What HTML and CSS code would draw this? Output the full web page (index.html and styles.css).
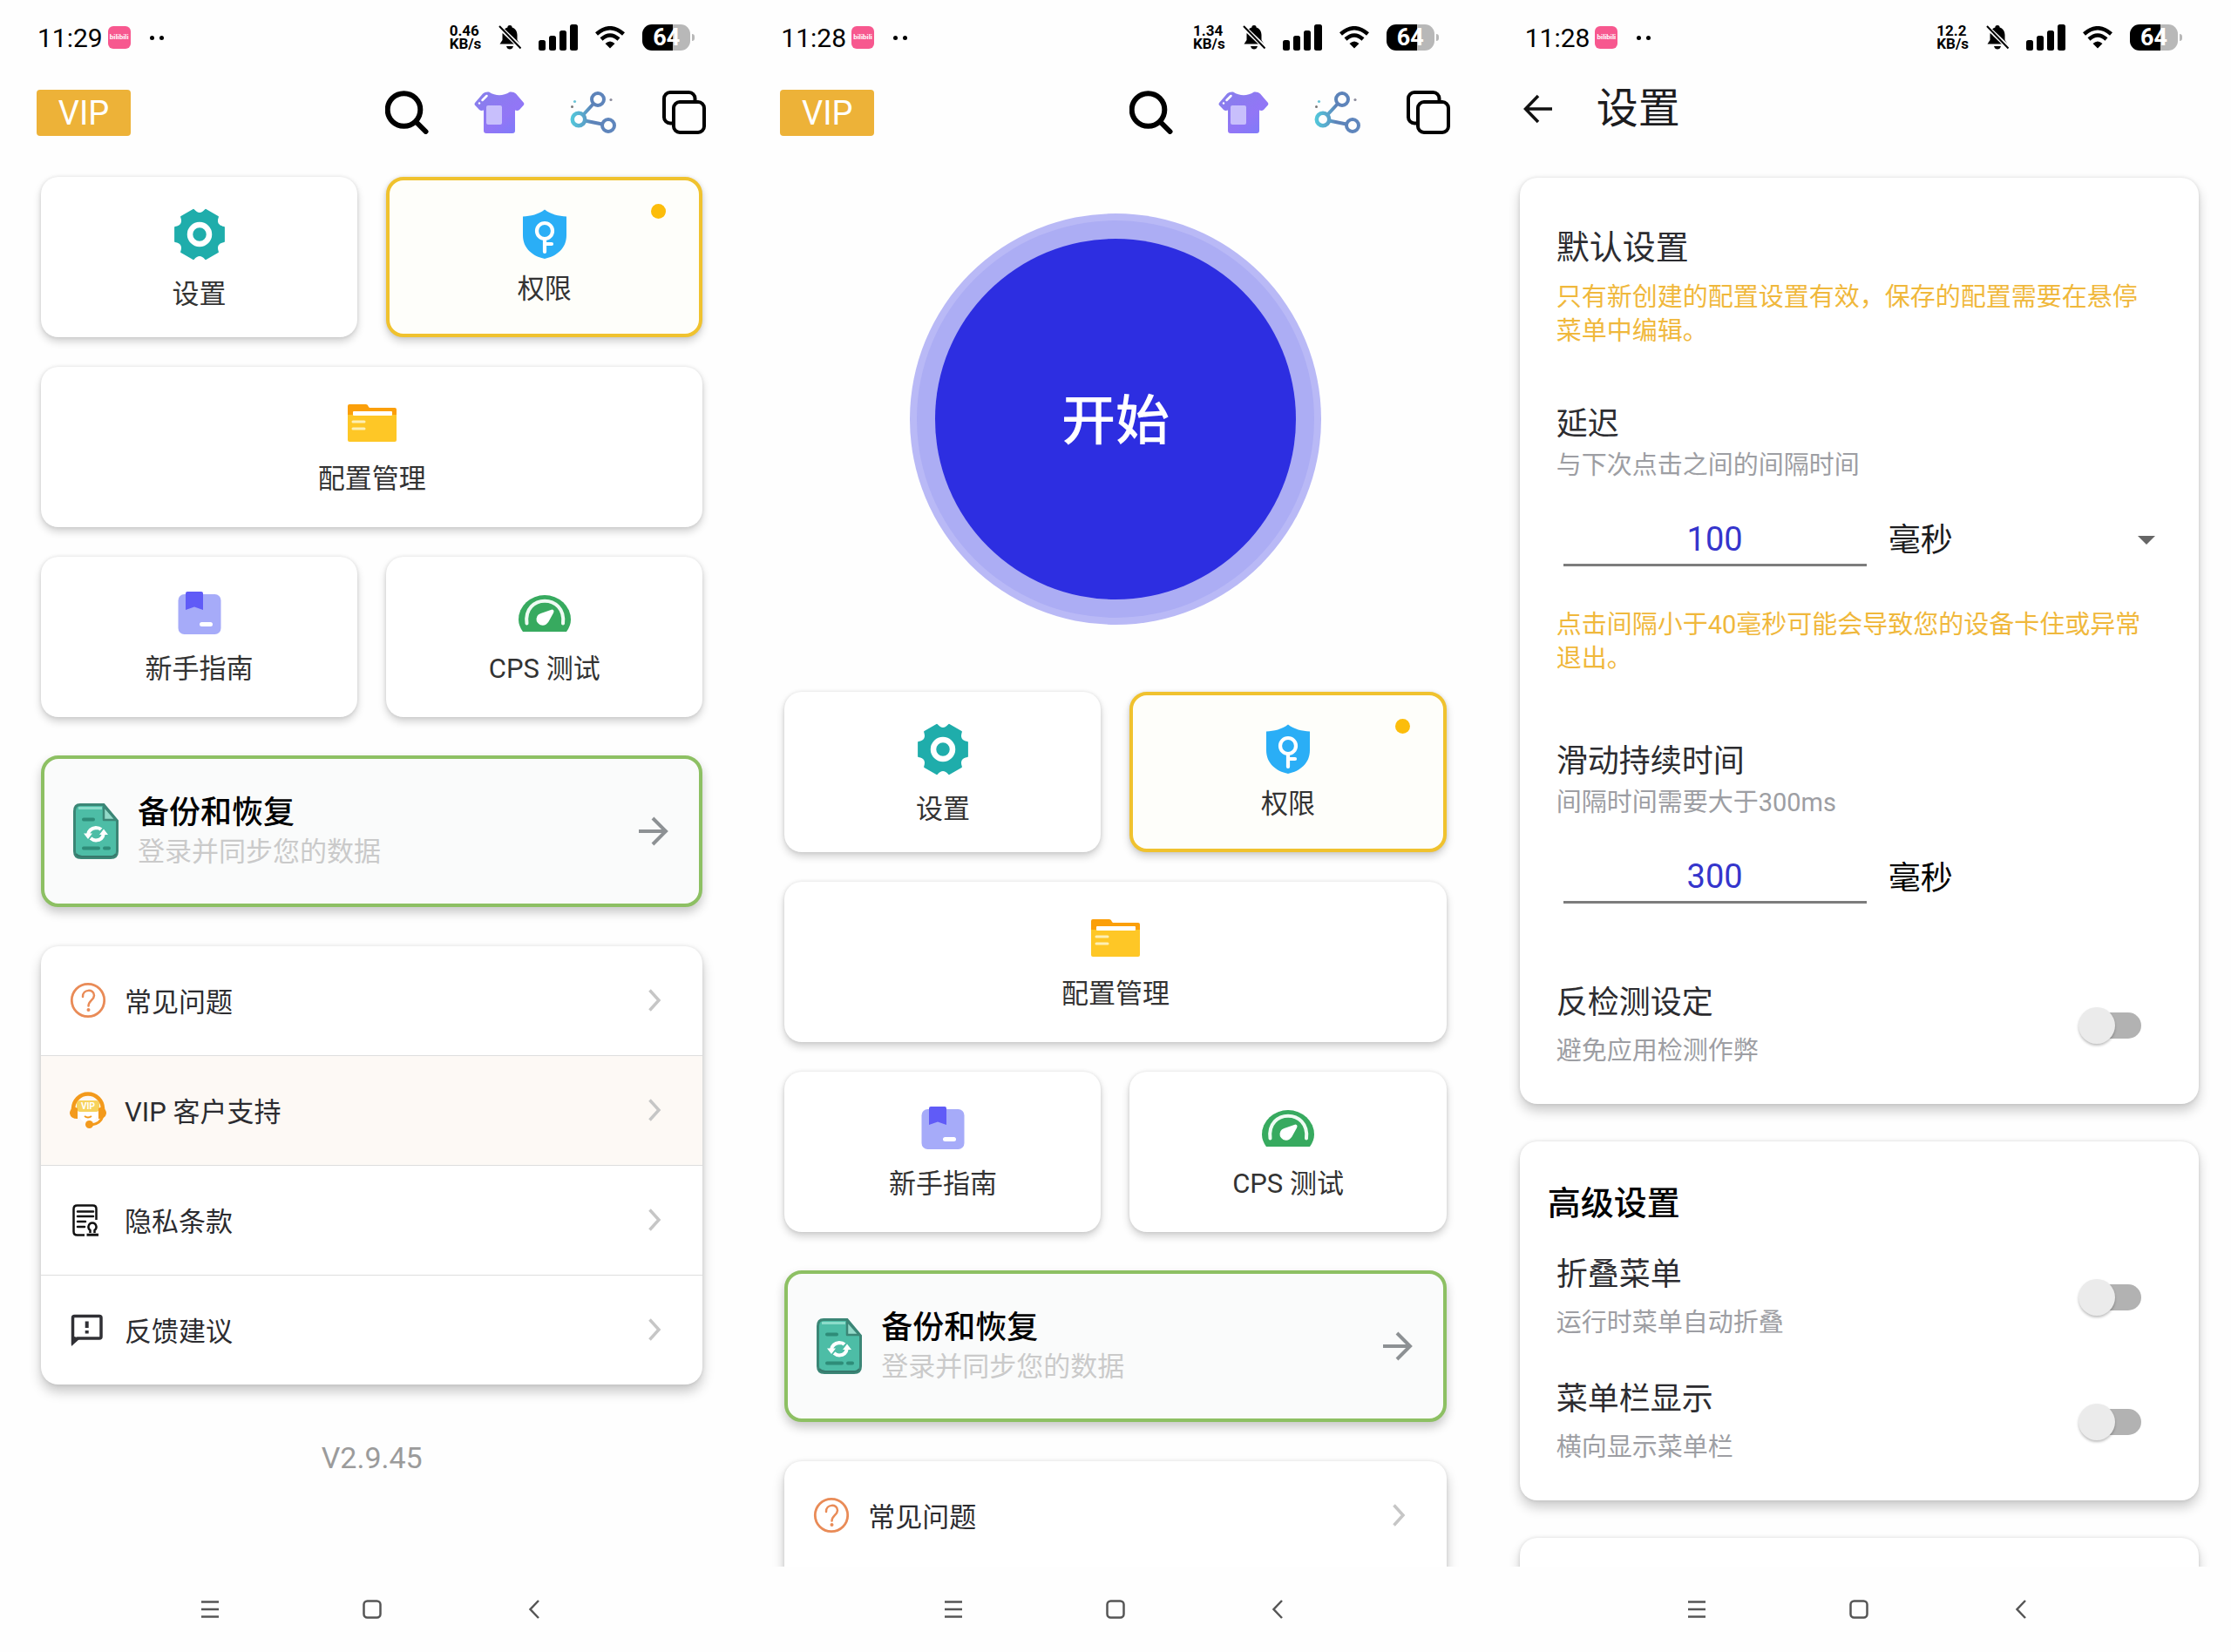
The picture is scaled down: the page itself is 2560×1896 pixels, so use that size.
FILE: index.html
```html
<!DOCTYPE html>
<html lang="zh-CN">
<head>
    <title>自动点击器</title>
    <meta charset="UTF-8">
    <meta name="viewport" content="width=device-width, initial-scale=1.0">
    <link rel="stylesheet" href="styles.css">
</head>
<body>
    <!-- icon sprite -->
    <svg class="sprite" aria-hidden="true">
        <defs>
            <linearGradient id="shirtFill" x1="0" y1="0" x2="1" y2="1">
                <stop offset="0" stop-color="#8680ea"/>
                <stop offset="0.6" stop-color="#9276f6"/>
                <stop offset="1" stop-color="#7b7cfa"/>
            </linearGradient>
            <linearGradient id="shareFill" gradientUnits="userSpaceOnUse" x1="0" y1="30" x2="50" y2="30">
                <stop offset="0" stop-color="#52cbdc"/>
                <stop offset="0.35" stop-color="#5aa0c8"/>
                <stop offset="0.5" stop-color="#5c82b8"/>
                <stop offset="1" stop-color="#5f86bd"/>
            </linearGradient>
        </defs>
        <symbol id="bell" viewBox="0 0 26 28">
            <path d="M13 0c2 0 2.600 1.200 2.600 2.400C19.500 3.600 21.500 7 21.500 11v6l3 4.500H1.500l3-4.500v-6c0-4 2-7.400 5.900-8.600C10.400 1.200 11 0 13 0z"/>
            <path d="M9 24h8q-1 3.500-4 3.500T9 24z"/>
            <path d="M0 1l26 25" stroke="#fff" stroke-width="5"/>
            <path d="M1 1l24.500 25.500" stroke="#000" stroke-width="2"/>
        </symbol>
        <symbol id="signal" viewBox="0 0 45 30">
            <rect x="0" y="18" width="8" height="12" rx="2.500"/>
            <rect x="12" y="13" width="8" height="17" rx="2.500"/>
            <rect x="24" y="7" width="8" height="23" rx="2.500"/>
            <rect x="36" y="0" width="9" height="30" rx="2.500"/>
        </symbol>
        <symbol id="wifi" viewBox="0 0 34 26">
            <g fill="none" stroke="#000" stroke-width="4.500">
                <path d="M1.500 9Q17-4.500 32.500 9"/>
                <path d="M7 15Q17 6 27 15"/>
            </g>
            <path d="M17 25.500l-5.500-5.500q5.500-5 11 0z"/>
        </symbol>
        <symbol id="search" viewBox="0 0 50 50">
            <g fill="none" stroke="#000" stroke-width="6" stroke-linecap="round">
                <circle cx="21.500" cy="22" r="18.800"/>
                <path d="M36.500 37L46.500 47"/>
            </g>
        </symbol>
        <symbol id="shirt" viewBox="0 0 58 50">
            <path d="M10 3.500Q12.500 1 17 1.500 29 9 41 1.500q4.500-.500 7 2L57 14q.800 1.200 0 2.500l-5 5.500q-2 1.500-5 .500V46q0 3-3 3H14q-3 0-3-3V22.500q-3 1-5-.500L.800 16.500Q0 15 1 14z" fill="url(#shirtFill)"/>
            <rect x="14" y="17" width="18" height="22" rx="2" fill="#c8bffc"/>
            <path d="M9.500 11l5-5" stroke="#fff" stroke-width="2.500" stroke-linecap="round"/>
            <circle cx="6" cy="14.500" r="1.200" fill="#fff"/>
        </symbol>
        <symbol id="share" viewBox="0 0 54 50">
            <g fill="none" stroke="url(#shareFill)" stroke-width="4">
                <circle cx="32" cy="10" r="7"/>
                <circle cx="10" cy="33" r="7.200" stroke-width="4.500"/>
                <circle cx="44" cy="40" r="7"/>
                <path d="M27 15L15 28M17 34.500L37 38.500"/>
            </g>
            <circle cx="5.500" cy="12.500" r="1.600" fill="#6bc3d6"/>
            <circle cx="2.500" cy="18.500" r="1.500" fill="#777"/>
            <circle cx="47" cy="10.500" r="1.600" fill="#8c8c9c"/>
        </symbol>
        <symbol id="copy" viewBox="0 0 50 50">
            <g fill="none" stroke="#000" stroke-width="4">
                <path d="M12 37.500H9a7 7 0 0 1-7-7V9a7 7 0 0 1 7-7h21.500a7 7 0 0 1 7 7v3"/>
                <rect x="13" y="13" width="35" height="35" rx="7"/>
            </g>
        </symbol>
        <symbol id="gear" viewBox="0 0 60 60">
            <path d="M57.900 22V38Q47.300 40 50.900 50.100L37 58.100Q30 50 23 58.100L9.100 50.100Q12.700 40 2.100 38V22Q12.700 20 9.100 9.900L23 1.900Q30 10 37 1.900L50.900 9.900Q47.300 20 57.900 22Z" fill="#1fadab" stroke="#1fadab" stroke-width="2" stroke-linejoin="round"/>
            <circle cx="30" cy="30" r="11" fill="none" stroke="#fff" stroke-width="6.500"/>
        </symbol>
        <symbol id="shield" viewBox="0 0 60 60">
            <path d="M30 1.500C37 7 46 9 55 9.500V31C55 46 44 55 30 58 16 55 5 46 5 31V9.500C14 9 23 7 30 1.500Z" fill="#2aaef6"/>
            <g fill="none" stroke="#fff" stroke-width="4.200" stroke-linecap="round">
                <circle cx="30" cy="26" r="9"/>
                <path d="M30 36V50M31 41h7"/>
            </g>
        </symbol>
        <symbol id="folder" viewBox="0 0 60 60">
            <path d="M2 22V9q0-2 2-2H23q2 0 3 3l1 1H56q2 0 2 2v9z" fill="#fb9f0a"/>
            <path d="M2 19H58V48q0 2-2 2H4q-2 0-2-2z" fill="#fec726"/>
            <rect x="8" y="15" width="45" height="5" rx="1" fill="#fff"/>
            <path d="M8 27H21M8 35H21" stroke="#fdf0b5" stroke-width="3" stroke-linecap="round"/>
        </symbol>
        <symbol id="book" viewBox="0 0 60 60">
            <rect x="5.500" y="7" width="49" height="46" rx="7" fill="#a6abf9"/>
            <path d="M14 6q0-2 2-2H32q2 0 2 2V25L24 21.500 14 25z" fill="#605bf7"/>
            <rect x="30" y="39" width="15" height="5" rx="2.500" fill="#fff"/>
        </symbol>
        <symbol id="gauge" viewBox="0 0 60 60">
            <path d="M5 50Q0 43 0 36a30 28 0 0 1 60 0Q60 43 55 50z" fill="#37aa5f"/>
            <path d="M9.500 40.500C5 6 55 6 51 40.500" fill="none" stroke="#effbf3" stroke-width="4" stroke-linecap="round"/>
            <path d="M38.500 24.500q3 .500 1.500 4L34.500 38.500q-4 6-10 3.500-6-4-3-10 1-2 4-3z" fill="#fff"/>
        </symbol>
        <symbol id="backup" viewBox="0 0 52 64">
            <path d="M8 1.500H35L50.500 20V55q0 7.500-7.500 7.500H9q-7.500 0-7.500-7.500V9Q1.500 1.500 8 1.500z" fill="#4dbda6" stroke="#3b8676" stroke-width="3"/>
            <path d="M6 5.500H33" stroke="#8bdcca" stroke-width="3"/>
            <path d="M35 3V19H49z" fill="#93d9c8" stroke="#3b8676" stroke-width="2.500" stroke-linejoin="round"/>
            <path d="M12 18.500H23M12 51.500H29M36 51.500H41" stroke="#2e8c78" stroke-width="4" stroke-linecap="round"/>
            <path d="M3 58q3 3 7 3H42q5 0 7-3" fill="none" stroke="#37796c" stroke-width="2"/>
            <g fill="none" stroke="#fff" stroke-width="4">
                <path d="M17 36q1-7 9-8 4 0 6 2"/>
                <path d="M35 34q-1 8-9 8.500-3 0-6-2.500"/>
            </g>
            <path d="M12 34.500h10L17 41zM30 36h10L35 29.500z" fill="#fff"/>
        </symbol>
        <symbol id="question" viewBox="0 0 42 42">
            <circle cx="21" cy="21" r="18.700" fill="none" stroke="#e98b57" stroke-width="2.800"/>
            <path d="M15 17c-.500-9 13-9.500 13-1.500 0 5-6.500 6-6.500 12" fill="none" stroke="#e98b57" stroke-width="2.500" stroke-linecap="round"/>
            <circle cx="21.500" cy="32" r="2" fill="#e98b57"/>
        </symbol>
        <symbol id="terms" viewBox="0 0 42 42">
            <g fill="none" stroke="#111" stroke-width="2.500">
                <path d="M17 38.500H8.500q-4 0-4-4V8.500q0-4 4-4h18q4 0 4 4V21"/>
                <path d="M9 11.500H27M9 17H27M9 23H18M9 29H17" stroke-linecap="round"/>
                <path d="M23.500 36V33q-2.500-2-2-4.500 1-4 4.500-4t4.500 4q.500 2.500-2 4.500V36"/>
                <path d="M19.500 38.200H33" stroke-width="3"/>
            </g>
        </symbol>
        <symbol id="feedback" viewBox="0 0 42 42">
            <path d="M3.500 35V7.500q0-2 2-2H34q2 0 2 2V29q0 2-2 2H9z" fill="none" stroke="#303035" stroke-width="3.500"/>
            <path d="M2 28V40L12 31z" fill="#303035"/>
            <path d="M19.700 11.500v7.500M19.700 22v3.500" stroke="#303035" stroke-width="4"/>
        </symbol>
        <symbol id="chevron" viewBox="0 0 16 26">
            <path d="M2.500 1.500L13 13 2.500 24.500" fill="none" stroke="#c6c6c6" stroke-width="3.500"/>
        </symbol>
        <symbol id="arrow" viewBox="0 0 34 34">
            <path d="M0 17H31M16 2L31 17 16 32" fill="none" stroke="#8d9194" stroke-width="4"/>
        </symbol>
        <symbol id="back" viewBox="0 0 34 34">
            <path d="M33 17H3M17 2L2.500 17 17 32" fill="none" stroke="#111" stroke-width="3.500"/>
        </symbol>
        <symbol id="navMenu" viewBox="0 0 24 24">
            <path d="M2 3.500H22M2 12H22M2 20.500H22" stroke="#555" stroke-width="2.500"/>
        </symbol>
        <symbol id="navHome" viewBox="0 0 24 24">
            <rect x="2.500" y="2.500" width="19" height="19" rx="4" fill="none" stroke="#555" stroke-width="2.500"/>
        </symbol>
        <symbol id="navBack" viewBox="0 0 24 24">
            <path d="M17 2L7.500 12 17 22" fill="none" stroke="#555" stroke-width="2.500"/>
        </symbol>
    </svg>

    <!-- home, scrolled down -->
    <section class="phone">
        <div class="status">
            <span class="time">11:29</span>
            <span class="app-icon">bilibili</span>
            <span class="dots"><i></i><i></i></span>
            <div class="status-right">
                <span class="speed">0.46<br>KB/s</span>
                <svg class="bell"><use href="#bell"/></svg>
                <svg class="signal"><use href="#signal"/></svg>
                <svg class="wifi"><use href="#wifi"/></svg>
                <span class="battery">64</span>
            </div>
        </div>
        <header class="toolbar">
            <button class="vip">VIP</button>
            <div class="tools">
                <button aria-label="搜索"><svg class="tool"><use href="#search"/></svg></button>
                <button aria-label="主题"><svg class="tool tool-shirt"><use href="#shirt"/></svg></button>
                <button aria-label="分享"><svg class="tool tool-share"><use href="#share"/></svg></button>
                <button aria-label="复制"><svg class="tool"><use href="#copy"/></svg></button>
            </div>
        </header>
        <main class="content home">
            <div class="tiles">
                <button class="tile tile-roomy"><svg><use href="#gear"/></svg>设置</button>
                <button class="tile tile-alert"><svg><use href="#shield"/></svg>权限<span class="dot"></span></button>
                <button class="tile tile-full"><svg><use href="#folder"/></svg>配置管理</button>
                <button class="tile"><svg><use href="#book"/></svg>新手指南</button>
                <button class="tile"><svg><use href="#gauge"/></svg>CPS 测试</button>
            </div>
            <button class="backup">
                <svg class="backup-icon"><use href="#backup"/></svg>
                <span class="backup-text"><strong>备份和恢复</strong><small>登录并同步您的数据</small></span>
                <svg class="arrow"><use href="#arrow"/></svg>
            </button>
            <nav class="list">
                <a href="#"><svg><use href="#question"/></svg>常见问题<svg class="chevron"><use href="#chevron"/></svg></a>
                <a href="#" class="warm">
                    <svg viewBox="0 0 42 42">
                        <path d="M4 20a16.500 17 0 0 1 34 0" fill="none" stroke="#f39a1c" stroke-width="4.500"/>
                        <path d="M11 22H31V28Q29 35 21 36 13 35 11 28z" fill="#fff"/>
                        <rect x="8" y="10" width="26" height="13" rx="4" fill="#f7d25c"/>
                        <path d="M17 28q4 3 8 0" fill="none" stroke="#f39a1c" stroke-width="2"/>
                        <path d="M9 19V31Q1 31 0 25 0 20 5 17zM33 19V31Q41 31 42 25 42 20 37 17z" fill="#f39a1c"/>
                        <path d="M38 28Q35 37 25 38" fill="none" stroke="#f39a1c" stroke-width="3"/>
                        <circle cx="22.500" cy="37.500" r="4.500" fill="#f39a1c"/>
                        <text class="support-vip" x="21" y="20" text-anchor="middle">VIP</text>
                    </svg>
                    VIP 客户支持
                    <svg class="chevron"><use href="#chevron"/></svg>
                </a>
                <a href="#"><svg><use href="#terms"/></svg>隐私条款<svg class="chevron"><use href="#chevron"/></svg></a>
                <a href="#"><svg><use href="#feedback"/></svg>反馈建议<svg class="chevron"><use href="#chevron"/></svg></a>
            </nav>
            <p class="version">V2.9.45</p>
        </main>
        <footer class="nav">
            <button aria-label="菜单"><svg><use href="#navMenu"/></svg></button>
            <button aria-label="主页"><svg><use href="#navHome"/></svg></button>
            <button aria-label="返回"><svg><use href="#navBack"/></svg></button>
        </footer>
    </section>

    <!-- home, top -->
    <section class="phone">
        <div class="status">
            <span class="time">11:28</span>
            <span class="app-icon">bilibili</span>
            <span class="dots"><i></i><i></i></span>
            <div class="status-right">
                <span class="speed">1.34<br>KB/s</span>
                <svg class="bell"><use href="#bell"/></svg>
                <svg class="signal"><use href="#signal"/></svg>
                <svg class="wifi"><use href="#wifi"/></svg>
                <span class="battery">64</span>
            </div>
        </div>
        <header class="toolbar">
            <button class="vip">VIP</button>
            <div class="tools">
                <button aria-label="搜索"><svg class="tool"><use href="#search"/></svg></button>
                <button aria-label="主题"><svg class="tool tool-shirt"><use href="#shirt"/></svg></button>
                <button aria-label="分享"><svg class="tool tool-share"><use href="#share"/></svg></button>
                <button aria-label="复制"><svg class="tool"><use href="#copy"/></svg></button>
            </div>
        </header>
        <main class="content home">
            <div class="hero">
                <button class="start">开始</button>
            </div>
            <div class="tiles">
                <button class="tile tile-roomy"><svg><use href="#gear"/></svg>设置</button>
                <button class="tile tile-alert"><svg><use href="#shield"/></svg>权限<span class="dot"></span></button>
                <button class="tile tile-full"><svg><use href="#folder"/></svg>配置管理</button>
                <button class="tile"><svg><use href="#book"/></svg>新手指南</button>
                <button class="tile"><svg><use href="#gauge"/></svg>CPS 测试</button>
            </div>
            <button class="backup">
                <svg class="backup-icon"><use href="#backup"/></svg>
                <span class="backup-text"><strong>备份和恢复</strong><small>登录并同步您的数据</small></span>
                <svg class="arrow"><use href="#arrow"/></svg>
            </button>
            <nav class="list list-cut">
                <a href="#"><svg><use href="#question"/></svg>常见问题<svg class="chevron"><use href="#chevron"/></svg></a>
            </nav>
        </main>
        <footer class="nav">
            <button aria-label="菜单"><svg><use href="#navMenu"/></svg></button>
            <button aria-label="主页"><svg><use href="#navHome"/></svg></button>
            <button aria-label="返回"><svg><use href="#navBack"/></svg></button>
        </footer>
    </section>

    <!-- settings -->
    <section class="phone">
        <div class="status">
            <span class="time">11:28</span>
            <span class="app-icon">bilibili</span>
            <span class="dots"><i></i><i></i></span>
            <div class="status-right">
                <span class="speed">12.2<br>KB/s</span>
                <svg class="bell"><use href="#bell"/></svg>
                <svg class="signal"><use href="#signal"/></svg>
                <svg class="wifi"><use href="#wifi"/></svg>
                <span class="battery">64</span>
            </div>
        </div>
        <header class="titlebar">
            <button aria-label="返回"><svg class="arrow"><use href="#back"/></svg></button>
            <h1>设置</h1>
        </header>
        <main class="content settings">
            <section class="card card-default">
                <h2>默认设置</h2>
                <p class="warning">只有新创建的配置设置有效，保存的配置需要在悬停菜单中编辑。</p>
                <div class="field">
                    <label for="delay">延迟</label>
                    <p class="hint">与下次点击之间的间隔时间</p>
                    <div class="field-row">
                        <input type="text" id="delay" value="100">
                        <div class="unit-select">
                            <select aria-label="单位">
                                <option>毫秒</option>
                            </select>
                        </div>
                    </div>
                </div>
                <p class="warning warning-delay">点击间隔小于40毫秒可能会导致您的设备卡住或异常退出。</p>
                <div class="field field-swipe">
                    <label for="swipe">滑动持续时间</label>
                    <p class="hint">间隔时间需要大于300ms</p>
                    <div class="field-row">
                        <input type="text" id="swipe" value="300">
                        <span class="unit">毫秒</span>
                    </div>
                </div>
                <div class="switch-row switch-detect">
                    <div>
                        <label for="detect">反检测设定</label>
                        <p class="hint">避免应用检测作弊</p>
                    </div>
                    <input type="checkbox" id="detect" class="switch">
                </div>
            </section>
            <section class="card card-advanced">
                <h2>高级设置</h2>
                <div class="switch-row">
                    <div>
                        <label for="fold">折叠菜单</label>
                        <p class="hint">运行时菜单自动折叠</p>
                    </div>
                    <input type="checkbox" id="fold" class="switch">
                </div>
                <div class="switch-row">
                    <div>
                        <label for="menubar">菜单栏显示</label>
                        <p class="hint">横向显示菜单栏</p>
                    </div>
                    <input type="checkbox" id="menubar" class="switch">
                </div>
            </section>
            <section class="card card-next"></section>
        </main>
        <footer class="nav">
            <button aria-label="菜单"><svg><use href="#navMenu"/></svg></button>
            <button aria-label="主页"><svg><use href="#navHome"/></svg></button>
            <button aria-label="返回"><svg><use href="#navBack"/></svg></button>
        </footer>
    </section>
</body>
</html>
```
FILE: styles.css
```css
* {
    box-sizing: border-box;
    margin: 0;
    padding: 0;
}

body {
    display: grid;
    grid-template-columns: repeat(3, 1fr);
    height: 100vh;
    overflow: hidden;
    background-color: #fefefe;
    color: #2c2c30;
    font-family: Roboto, "Noto Sans CJK SC", sans-serif;
    font-size: 31px;
}

button,
input,
select {
    border: none;
    background: none;
    color: inherit;
    font: inherit;
}

button {
    cursor: pointer;
}

svg {
    display: block;
    flex: none;
}

.sprite {
    position: absolute;
    width: 0;
    height: 0;
}

.phone {
    display: flex;
    flex-direction: column;
    min-width: 0;
    height: 100vh;
}

/* status bar */
.status {
    display: flex;
    align-items: center;
    flex: none;
    height: 86px;
    padding: 0 61px 0 43px;
    color: #000;
}

.time {
    margin-right: 6px;
    font-size: 30px;
}

.app-icon {
    width: 26px;
    border-radius: 6px;
    background-color: #f7588f;
    color: #fff;
    font-size: 8px;
    font-weight: 700;
    line-height: 26px;
    text-align: center;
}

.dots {
    display: flex;
    gap: 6px;
    margin-left: 22px;
}

.dots i {
    width: 5px;
    height: 5px;
    border-radius: 50%;
    background-color: #000;
}

.status-right {
    display: flex;
    align-items: center;
    gap: 20px;
    margin-left: auto;
}

.speed {
    font-size: 17px;
    font-weight: 700;
    line-height: 15px;
}

.bell {
    width: 26px;
    height: 28px;
}

.signal {
    width: 45px;
    height: 30px;
}

.wifi {
    width: 34px;
    height: 26px;
}

.battery {
    position: relative;
    width: 55px;
    border-radius: 11px;
    background: linear-gradient(to right, #000 64%, #b8b8b8 64%);
    color: #fff;
    font-size: 27px;
    font-weight: 700;
    line-height: 30px;
    text-align: center;
}

.battery::after {
    content: "";
    position: absolute;
    top: 11px;
    right: -5px;
    width: 3px;
    height: 8px;
    border-radius: 0 3px 3px 0;
    background-color: #b8b8b8;
}

/* top bars */
.toolbar {
    display: flex;
    align-items: center;
    justify-content: space-between;
    flex: none;
    height: 86px;
    padding: 0 43px 0 42px;
}

.vip {
    width: 108px;
    padding-top: 2px;
    border-radius: 4px;
    background-color: #edb238;
    color: #fff;
    font-size: 38px;
    line-height: 51px;
}

.tools {
    display: flex;
    align-items: center;
    gap: 52px;
}

.tool {
    width: 50px;
    height: 50px;
}

.tool-shirt {
    width: 58px;
}

.tool-share {
    width: 54px;
}

.titlebar {
    display: flex;
    align-items: center;
    gap: 50px;
    flex: none;
    height: 78px;
    padding-left: 41px;
}

.titlebar h1 {
    color: #1c1c1e;
    font-size: 48px;
    font-weight: 400;
    line-height: 64px;
}

.content {
    flex: 1;
    min-height: 0;
    overflow: hidden;
}

/* home */
.home {
    padding: 31px 47px 0;
}

.hero {
    display: flex;
    justify-content: center;
    padding: 71px 0 106px;
}

.start {
    width: 414px;
    height: 414px;
    padding-bottom: 6px;
    border-radius: 50%;
    background-color: #2d2ee1;
    box-shadow: 0 0 0 21px #acadf4, 0 0 0 29px #b9b9f6;
    color: #fff;
    font-size: 62px;
    font-weight: 500;
}

.tiles {
    display: grid;
    grid-template-columns: 1fr 1fr;
    gap: 34px 33px;
}

.tile,
.list,
.card {
    border-radius: 20px;
    background-color: #fff;
    box-shadow: 0 5px 10px rgba(0, 0, 0, 0.18), 0 0 4px rgba(0, 0, 0, 0.1);
}

.tile {
    position: relative;
    display: flex;
    flex-direction: column;
    align-items: center;
    gap: 13px;
    height: 184px;
    padding-top: 36px;
    color: #333;
    line-height: 40px;
}

.tile svg {
    width: 60px;
    height: 60px;
}

.tile-roomy {
    gap: 19px;
}

.tile-full {
    grid-column: 1 / -1;
}

.tile-alert {
    padding-top: 32px;
    border: 4px solid #f0c22e;
    background-color: #fefefa;
}

.dot {
    position: absolute;
    top: 27px;
    right: 38px;
    width: 17px;
    height: 17px;
    border-radius: 50%;
    background-color: #fcbd0b;
}

.backup {
    display: flex;
    align-items: center;
    width: 100%;
    height: 174px;
    margin: 44px 0 45px;
    padding: 0 35px 0 33px;
    border: 4px solid #8dc063;
    border-radius: 20px;
    background-color: #fafbfb;
    box-shadow: 0 6px 12px rgba(0, 0, 0, 0.22);
    text-align: left;
}

.backup-icon {
    width: 52px;
    height: 64px;
}

.backup-text {
    display: flex;
    flex: 1;
    flex-direction: column;
    margin-left: 22px;
}

.backup-text strong {
    color: #000;
    font-size: 36px;
    font-weight: 500;
    line-height: 48px;
}

.backup-text small {
    color: #cacaca;
    font-size: 31px;
    line-height: 42px;
}

.arrow {
    width: 34px;
    height: 34px;
}

.list {
    overflow: hidden;
    box-shadow: 0 8px 14px rgba(0, 0, 0, 0.22), 0 0 4px rgba(0, 0, 0, 0.1);
}

.list-cut {
    padding-bottom: 80px;
}

.list a {
    display: flex;
    align-items: center;
    gap: 21px;
    height: 125px;
    padding: 0 47px 2px 33px;
    color: inherit;
    text-decoration: none;
}

.list a + a {
    height: 126px;
    border-top: 1px solid #dedede;
}

.list svg {
    width: 42px;
    height: 42px;
}

.list .chevron {
    width: 16px;
    height: 26px;
    margin-left: auto;
}

.list .warm {
    background-color: #fdf9f5;
}

.support-vip {
    fill: #fff;
    font-size: 10px;
    font-weight: 700;
}

.version {
    margin-top: 60px;
    color: #9b9b9b;
    font-size: 34px;
    line-height: 48px;
    text-align: center;
}

/* settings */
.settings {
    padding: 40px 37px 0;
}

.card {
    margin-bottom: 43px;
    padding: 0 48px 41px 42px;
    box-shadow: 0 8px 14px rgba(0, 0, 0, 0.2), 0 0 4px rgba(0, 0, 0, 0.12);
}

.card h2 {
    font-size: 38px;
    font-weight: 400;
    line-height: 52px;
}

.card label {
    display: block;
    font-size: 36px;
    line-height: 48px;
}

.card-default {
    padding-top: 54px;
}

.warning,
.hint {
    font-size: 29px;
    line-height: 39px;
}

.warning {
    margin-top: 12px;
    color: #f0b83c;
}

.warning-delay {
    margin-top: 48px;
}

.hint {
    margin-top: 4px;
    color: #9d9ea3;
}

.field {
    margin-top: 63px;
}

.field-swipe {
    margin-top: 74px;
}

.field-row {
    display: flex;
    align-items: center;
    gap: 25px;
    margin-top: 36px;
    padding-left: 8px;
    color: #1c1c1e;
    font-size: 37px;
}

.field-row input {
    width: 348px;
    height: 60px;
    border-bottom: 3px solid #7c7c7c;
    color: #3535cc;
    font-size: 38px;
    text-align: center;
}

.unit {
    padding-bottom: 4px;
    color: #000;
}

.unit-select {
    display: grid;
    flex: 1;
    align-items: center;
    padding-right: 2px;
}

.unit-select::after {
    content: "";
    grid-area: 1 / 1;
    justify-self: end;
    border: 10px solid transparent;
    border-top-color: #666;
    border-bottom: none;
    pointer-events: none;
}

.unit-select select {
    grid-area: 1 / 1;
    appearance: none;
    width: 100%;
}

.switch-row {
    display: flex;
    align-items: center;
    justify-content: space-between;
    padding-right: 18px;
}

.switch-row .hint {
    margin-top: 12px;
}

.switch-detect {
    margin-top: 90px;
}

.switch {
    display: grid;
    align-items: center;
    appearance: none;
    width: 72px;
    height: 44px;
    cursor: pointer;
}

.switch::before,
.switch::after {
    content: "";
    grid-area: 1 / 1;
}

.switch::before {
    justify-self: end;
    width: 60px;
    height: 30px;
    border-radius: 15px;
    background-color: #b2b2b2;
}

.switch::after {
    width: 42px;
    height: 42px;
    border-radius: 50%;
    background-color: #ebebeb;
    box-shadow: 0 2px 3px rgba(0, 0, 0, 0.25);
}

.switch:checked::after {
    justify-self: end;
}

.card-advanced {
    padding-top: 45px;
    padding-left: 32px;
}

.card-advanced h2 {
    color: #000;
    font-weight: 500;
}

.card-advanced .switch-row {
    margin-top: 32px;
    padding-left: 10px;
}

.card-advanced .switch-row + .switch-row {
    margin-top: 44px;
}

.card-next {
    height: 200px;
}

/* system navigation */
.nav {
    display: flex;
    align-items: center;
    justify-content: center;
    gap: 126px;
    flex: none;
    height: 98px;
}

.nav button {
    display: grid;
    place-items: center;
    width: 60px;
    height: 60px;
}

.nav svg {
    width: 24px;
    height: 24px;
}
```
